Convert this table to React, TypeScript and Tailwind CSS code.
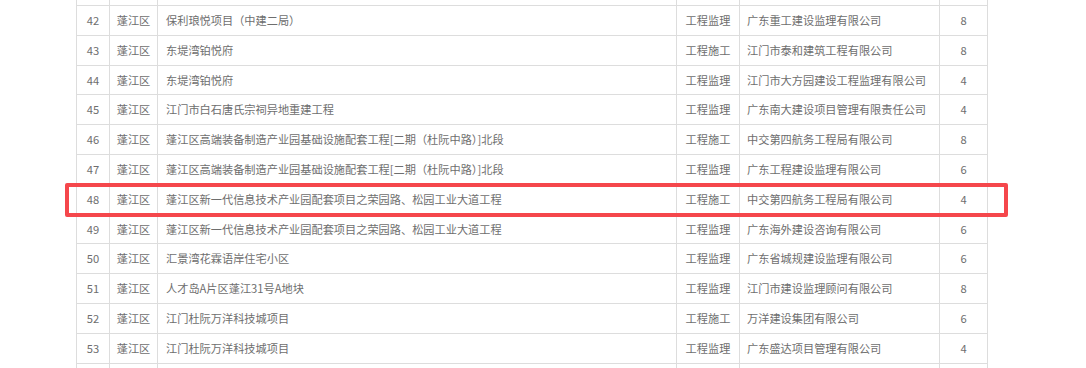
import React from "react";

type Row = { no: string; area: string; name: string; type: string; company: string; n: string };

const rows: Row[] = [
  { no: "", area: "", name: "", type: "", company: "", n: "" },
  { no: "42", area: "蓬江区", name: "保利琅悦项目（中建二局）", type: "工程监理", company: "广东重工建设监理有限公司", n: "8" },
  { no: "43", area: "蓬江区", name: "东堤湾铂悦府", type: "工程施工", company: "江门市泰和建筑工程有限公司", n: "8" },
  { no: "44", area: "蓬江区", name: "东堤湾铂悦府", type: "工程监理", company: "江门市大方园建设工程监理有限公司", n: "4" },
  { no: "45", area: "蓬江区", name: "江门市白石唐氏宗祠异地重建工程", type: "工程监理", company: "广东南大建设项目管理有限责任公司", n: "4" },
  { no: "46", area: "蓬江区", name: "蓬江区高端装备制造产业园基础设施配套工程[二期（杜阮中路）]北段", type: "工程施工", company: "中交第四航务工程局有限公司", n: "8" },
  { no: "47", area: "蓬江区", name: "蓬江区高端装备制造产业园基础设施配套工程[二期（杜阮中路）]北段", type: "工程监理", company: "广东工程建设监理有限公司", n: "6" },
  { no: "48", area: "蓬江区", name: "蓬江区新一代信息技术产业园配套项目之荣园路、松园工业大道工程", type: "工程施工", company: "中交第四航务工程局有限公司", n: "4" },
  { no: "49", area: "蓬江区", name: "蓬江区新一代信息技术产业园配套项目之荣园路、松园工业大道工程", type: "工程监理", company: "广东海外建设咨询有限公司", n: "6" },
  { no: "50", area: "蓬江区", name: "汇景湾花霖语岸住宅小区", type: "工程监理", company: "广东省城规建设监理有限公司", n: "6" },
  { no: "51", area: "蓬江区", name: "人才岛A片区蓬江31号A地块", type: "工程监理", company: "江门市建设监理顾问有限公司", n: "8" },
  { no: "52", area: "蓬江区", name: "江门杜阮万洋科技城项目", type: "工程施工", company: "万洋建设集团有限公司", n: "6" },
  { no: "53", area: "蓬江区", name: "江门杜阮万洋科技城项目", type: "工程监理", company: "广东盛达项目管理有限公司", n: "4" },
  { no: "", area: "", name: "", type: "", company: "", n: "" },
];

export default function App() {
  return (
    <div
      className="relative w-[1086px] h-[368px] overflow-hidden bg-white text-[#6e6e6e] text-[11.2px]"
      style={{ fontFamily: '"Noto Sans CJK SC", "Noto Sans", sans-serif' }}
    >
      <div className="ml-[76px] mt-[-23.8px] w-[912px] flex flex-col">
        {rows.map((r, i) => (
          <div key={i} className="flex h-[29.8px] border-b border-[#dddddd] items-stretch">
            <div className="w-[33px] border-l border-[#dddddd] flex items-center justify-center">{r.no}</div>
            <div className="w-[48px] border-l border-[#dddddd] flex items-center justify-center">{r.area}</div>
            <div className="w-[519px] border-l border-[#dddddd] flex items-center pl-[8px] whitespace-nowrap">{r.name}</div>
            <div className="w-[63px] border-l border-[#dddddd] flex items-center justify-center whitespace-nowrap">{r.type}</div>
            <div className="w-[200px] border-l border-[#dddddd] flex items-center pl-[7px] whitespace-nowrap">{r.company}</div>
            <div className="w-[49px] border-l border-r border-[#dddddd] flex items-center justify-center">{r.n}</div>
          </div>
        ))}
      </div>
      <div className="absolute left-[65px] top-[183px] w-[943px] h-[34px] border-4 border-[#f5474c] rounded-[2px]" />
    </div>
  );
}
